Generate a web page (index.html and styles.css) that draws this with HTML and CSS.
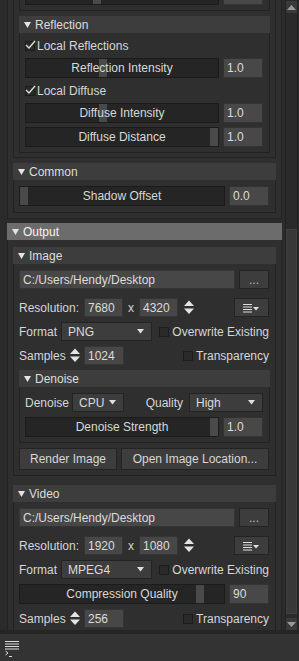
FILE: index.html
```html
<!DOCTYPE html>
<html lang="en">
<head>
    <meta charset="UTF-8">
    <meta name="viewport" content="width=device-width, initial-scale=1.0">
    <title>Render Settings</title>
    <link rel="stylesheet" href="styles.css">
</head>
<body>
<div class="window">
    <div class="main">
        <div class="viewport">
            <div class="content">

                <!-- panel scrolled past the top -->
                <section class="panel">
                    <div class="panel-body boxed">
                        <section class="panel">
                            <div class="panel-body boxed tight">
                                <section class="panel">
                                    <div class="panel-body boxed">
                                        <div class="slider-row">
                                            <div class="slider"><span class="handle" style="left: 67px"></span></div>
                                            <div class="value"></div>
                                        </div>
                                    </div>
                                </section>

                                <section class="panel">
                                    <div class="panel-head">
                                        <svg class="tri" width="7" height="6" viewBox="0 0 7 6"><path d="M0 0H7L3.5 6Z"/></svg>
                                        Reflection
                                    </div>
                                    <div class="panel-body list">
                                        <label class="check-row">
                                            <span class="box on"><svg width="11" height="10" viewBox="0 0 11 10"><path d="M1 5L4 8L10 1"/></svg></span>
                                            Local Reflections
                                        </label>
                                        <div class="slider-row">
                                            <div class="slider"><span class="handle" style="left: 73px"></span><span class="slider-text">Reflection Intensity</span></div>
                                            <div class="value">1.0</div>
                                        </div>
                                        <label class="check-row">
                                            <span class="box on"><svg width="11" height="10" viewBox="0 0 11 10"><path d="M1 5L4 8L10 1"/></svg></span>
                                            Local Diffuse
                                        </label>
                                        <div class="slider-row">
                                            <div class="slider"><span class="handle" style="left: 73px"></span><span class="slider-text">Diffuse Intensity</span></div>
                                            <div class="value">1.0</div>
                                        </div>
                                        <div class="slider-row">
                                            <div class="slider"><span class="handle end"></span><span class="slider-text">Diffuse Distance</span></div>
                                            <div class="value">1.0</div>
                                        </div>
                                    </div>
                                </section>
                            </div>
                        </section>

                        <section class="panel">
                            <div class="panel-head">
                                <svg class="tri" width="7" height="6" viewBox="0 0 7 6"><path d="M0 0H7L3.5 6Z"/></svg>
                                Common
                            </div>
                            <div class="panel-body roomy">
                                <div class="slider-row">
                                    <div class="slider"><span class="handle" style="left: 0px"></span><span class="slider-text">Shadow Offset</span></div>
                                    <div class="value">0.0</div>
                                </div>
                            </div>
                        </section>
                    </div>
                </section>

                <section class="panel">
                    <div class="panel-head active">
                        <svg class="tri" width="7" height="6" viewBox="0 0 7 6"><path d="M0 0H7L3.5 6Z"/></svg>
                        Output
                    </div>
                    <div class="panel-body output">

                        <section class="panel">
                            <div class="panel-head">
                                <svg class="tri" width="7" height="6" viewBox="0 0 7 6"><path d="M0 0H7L3.5 6Z"/></svg>
                                Image
                            </div>
                            <div class="panel-body form">
                                <div class="row">
                                    <div class="field path">C:/Users/Hendy/Desktop</div>
                                    <button class="btn dots">...</button>
                                </div>
                                <div class="row res">
                                    <span class="label w-res">Resolution:</span>
                                    <div class="field num">7680</div>
                                    <span class="times">x</span>
                                    <div class="field num">4320</div>
                                    <svg class="spin" width="10" height="15" viewBox="0 0 10 15"><path d="M0 6L5 0.5L10 6Z M0 8.5H10L5 14Z"/></svg>
                                    <button class="btn menu">
                                        <svg width="17" height="10" viewBox="0 0 17 10"><path class="lines" d="M0 1.5H9M0 4H9M0 6.5H9M0 9H9"/><path d="M10 4H16L13 7.5Z"/></svg>
                                    </button>
                                </div>
                                <div class="row">
                                    <span class="label w-fmt">Format</span>
                                    <div class="combo w-format">PNG<svg width="7" height="5" viewBox="0 0 7 5"><path d="M0 0H7L3.5 4.5Z"/></svg></div>
                                    <label class="check"><span class="box"></span>Overwrite Existing</label>
                                </div>
                                <div class="row">
                                    <span class="label w-smp">Samples</span>
                                    <svg class="spin lead" width="10" height="15" viewBox="0 0 10 15"><path d="M0 6L5 0.5L10 6Z M0 8.5H10L5 14Z"/></svg>
                                    <div class="field num samples">1024</div>
                                    <label class="check right"><span class="box"></span>Transparency</label>
                                </div>

                                <section class="panel">
                                    <div class="panel-head">
                                        <svg class="tri" width="7" height="6" viewBox="0 0 7 6"><path d="M0 0H7L3.5 6Z"/></svg>
                                        Denoise
                                    </div>
                                    <div class="panel-body form">
                                        <div class="row">
                                            <span class="label w-dn">Denoise</span>
                                            <div class="combo w-cpu">CPU<svg width="7" height="5" viewBox="0 0 7 5"><path d="M0 0H7L3.5 4.5Z"/></svg></div>
                                            <span class="label quality">Quality</span>
                                            <div class="combo w-high">High<svg width="7" height="5" viewBox="0 0 7 5"><path d="M0 0H7L3.5 4.5Z"/></svg></div>
                                        </div>
                                        <div class="slider-row">
                                            <div class="slider"><span class="handle end"></span><span class="slider-text">Denoise Strength</span></div>
                                            <div class="value">1.0</div>
                                        </div>
                                    </div>
                                </section>

                                <div class="row buttons">
                                    <button class="btn render">Render Image</button>
                                    <button class="btn open">Open Image Location...</button>
                                </div>
                            </div>
                        </section>

                        <section class="panel">
                            <div class="panel-head">
                                <svg class="tri" width="7" height="6" viewBox="0 0 7 6"><path d="M0 0H7L3.5 6Z"/></svg>
                                Video
                            </div>
                            <div class="panel-body form video">
                                <div class="row">
                                    <div class="field path">C:/Users/Hendy/Desktop</div>
                                    <button class="btn dots">...</button>
                                </div>
                                <div class="row res">
                                    <span class="label w-res">Resolution:</span>
                                    <div class="field num">1920</div>
                                    <span class="times">x</span>
                                    <div class="field num">1080</div>
                                    <svg class="spin" width="10" height="15" viewBox="0 0 10 15"><path d="M0 6L5 0.5L10 6Z M0 8.5H10L5 14Z"/></svg>
                                    <button class="btn menu">
                                        <svg width="17" height="10" viewBox="0 0 17 10"><path class="lines" d="M0 1.5H9M0 4H9M0 6.5H9M0 9H9"/><path d="M10 4H16L13 7.5Z"/></svg>
                                    </button>
                                </div>
                                <div class="row">
                                    <span class="label w-fmt">Format</span>
                                    <div class="combo w-format">MPEG4<svg width="7" height="5" viewBox="0 0 7 5"><path d="M0 0H7L3.5 4.5Z"/></svg></div>
                                    <label class="check"><span class="box"></span>Overwrite Existing</label>
                                </div>
                                <div class="slider-row">
                                    <div class="slider"><span class="handle" style="left: 176px"></span><span class="slider-text">Compression Quality</span></div>
                                    <div class="value">90</div>
                                </div>
                                <div class="row">
                                    <span class="label w-smp">Samples</span>
                                    <svg class="spin lead" width="10" height="15" viewBox="0 0 10 15"><path d="M0 6L5 0.5L10 6Z M0 8.5H10L5 14Z"/></svg>
                                    <div class="field num samples">256</div>
                                    <label class="check right"><span class="box"></span>Transparency</label>
                                </div>
                            </div>
                        </section>

                    </div>
                </section>

            </div>
        </div>

        <div class="scrollbar">
            <div class="sb-btn"><svg width="9" height="5" viewBox="0 0 9 5"><path d="M0 5L4.5 0L9 5Z"/></svg></div>
            <div class="sb-track"><div class="sb-handle"></div></div>
            <div class="sb-btn"><svg width="9" height="5" viewBox="0 0 9 5"><path d="M0 0H9L4.5 5Z"/></svg></div>
        </div>
    </div>

    <div class="divider"></div>

    <div class="statusbar">
        <svg class="console" width="15" height="16" viewBox="0 0 15 16">
            <path d="M0 0.5H14M0 3H14M0 5.5H14M0 8H14"/>
            <path d="M0.5 10L3 12L0.5 14M4 15.5H7"/>
        </svg>
    </div>
</div>
</body>
</html>
```

FILE: styles.css
```css
* {
    margin: 0;
    padding: 0;
    box-sizing: border-box;
}

body {
    font-family: "Liberation Sans", Arial, sans-serif;
    font-size: 12px;
    color: #d6d6d6;
    background: #2b2b2b;
    width: 299px;
    height: 661px;
    overflow: hidden;
}

.window {
    display: flex;
    flex-direction: column;
    height: 661px;
}

.main {
    display: flex;
    height: 630px;
}

.viewport {
    width: 285px;
    overflow: hidden;
}

/* scrolled down by 30px */
.content {
    margin-top: -30px;
    padding: 0 3px 0 7px;
    display: flex;
    flex-direction: column;
    gap: 4px;
}

/* Panels */
.panel {
    display: flex;
    flex-direction: column;
}

.panel-head {
    height: 17px;
    background: #3d3d3d;
    color: #dcdcdc;
    display: flex;
    align-items: center;
    gap: 4px;
    padding-left: 5px;
}

.panel-head.active {
    background: #6c6c6c;
    color: #f4f4f4;
}

.tri path {
    fill: #e4e4e4;
}

.panel-body {
    border: 1px solid #222222;
    border-top: none;
    padding: 4px 5px;
    display: flex;
    flex-direction: column;
    gap: 5px;
    background: #2f2f2f;
}

.panel-body.boxed {
    border-top: 1px solid #222222;
    padding-bottom: 5px;
}

.panel-body.tight {
    padding-bottom: 4px;
}

.panel-body.list {
    gap: 4px;
    padding-bottom: 5px;
}

.panel-body.roomy {
    padding: 6px 5px;
}

.panel-body.output {
    padding: 7px 5px 5px;
    gap: 9px;
}

.panel-body.form {
    padding: 6px 5px 5px;
}

.panel-body.video {
    padding: 6px 5px 3px;
}

/* Rows */
.row {
    display: flex;
    align-items: center;
    height: 19px;
    margin-right: 1px;
}

.row.res {
    margin-top: 4px;
}

.row.buttons {
    height: 22px;
    gap: 4px;
}

.check-row {
    height: 17px;
    display: flex;
    align-items: center;
    gap: 2px;
}

.label {
    white-space: nowrap;
}

.w-res { width: 65px; }
.w-fmt { width: 43px; }
.w-smp { width: 51px; }
.w-dn  { width: 47px; }

.quality {
    margin-left: auto;
    margin-right: 6px;
}

/* Sliders */
.slider-row {
    display: flex;
    gap: 4px;
    height: 20px;
    margin-right: 1px;
}

.slider {
    flex: 1;
    position: relative;
    background: #252525;
    border: 1px solid #1b1b1b;
    display: flex;
    align-items: center;
    justify-content: center;
}

.handle {
    position: absolute;
    top: 0;
    bottom: 0;
    width: 8px;
    background: #4a4a4a;
}

.handle.end {
    right: 0;
}

.slider-text {
    position: relative;
    color: #d8d8d8;
}

.value {
    width: 40px;
    background: #484848;
    border: 1px solid #333333;
    padding-left: 3px;
    display: flex;
    align-items: center;
    color: #dcdcdc;
}

/* Inputs */
.field {
    height: 19px;
    background: #474747;
    border: 1px solid #343434;
    padding-left: 3px;
    display: flex;
    align-items: center;
    color: #dcdcdc;
    white-space: nowrap;
    overflow: hidden;
}

.field.path {
    flex: 1;
}

.field.num {
    width: 39px;
}

.field.samples {
    width: 40px;
    margin-left: 4px;
}

.times {
    width: 16px;
    text-align: center;
}

.spin {
    margin-left: 6px;
}

.spin.lead {
    margin-left: 0;
}

.spin path {
    fill: #e4e4e4;
}

.btn {
    font: inherit;
    color: #d6d6d6;
    background: #3d3d3d;
    border: 1px solid #232323;
    height: 100%;
    display: flex;
    align-items: center;
    justify-content: center;
}

.btn.dots {
    width: 30px;
    margin-left: 4px;
    color: #bbbbbb;
}

.btn.menu {
    width: 35px;
    margin-left: auto;
}

.btn.menu .lines {
    stroke: #e0e0e0;
    stroke-width: 1;
    fill: none;
}

.btn.menu path {
    fill: #e0e0e0;
}

.btn.render {
    width: 98px;
}

.btn.open {
    flex: 1;
}

.combo {
    height: 19px;
    background: #3d3d3d;
    border: 1px solid #232323;
    display: flex;
    align-items: center;
    justify-content: space-between;
    padding: 0 7px 0 6px;
    color: #dadada;
}

.combo svg path {
    fill: #e0e0e0;
}

.w-format { width: 93px; }
.w-cpu    { width: 52px; }
.w-high   { width: 74px; }

/* Checkboxes */
.check {
    display: flex;
    align-items: center;
    gap: 3px;
    margin-left: 7px;
    white-space: nowrap;
}

.check.right {
    margin-left: auto;
}

.box {
    width: 10px;
    height: 10px;
    background: #2a2a2a;
    border: 1px solid #1c1c1c;
    position: relative;
    flex: none;
}

.box.on svg {
    position: absolute;
    left: -1px;
    top: -2px;
}

.box.on path {
    stroke: #dedede;
    stroke-width: 1.4;
    fill: none;
}

/* Scrollbar */
.scrollbar {
    width: 13px;
    background: #2a2a2a;
    border-left: 1px solid #222222;
    border-right: 1px solid #222222;
    display: flex;
    flex-direction: column;
}

.sb-btn {
    height: 12px;
    margin-top: 1px;
    background: #3a3a3a;
    display: flex;
    align-items: center;
    justify-content: center;
}

.sb-btn path {
    fill: #9a9a9a;
}

.sb-track {
    flex: 1;
    padding: 216px 0 2px;
}

.sb-handle {
    height: 385px;
    background: #383838;
    border: 1px solid #404040;
}

/* Status bar */
.divider {
    height: 4px;
    background: #252525;
}

.statusbar {
    flex: 1;
    background: #333333;
    padding: 7px 0 0 5px;
}

.console path {
    stroke: #dcdcdc;
    stroke-width: 1;
    fill: none;
}
```
